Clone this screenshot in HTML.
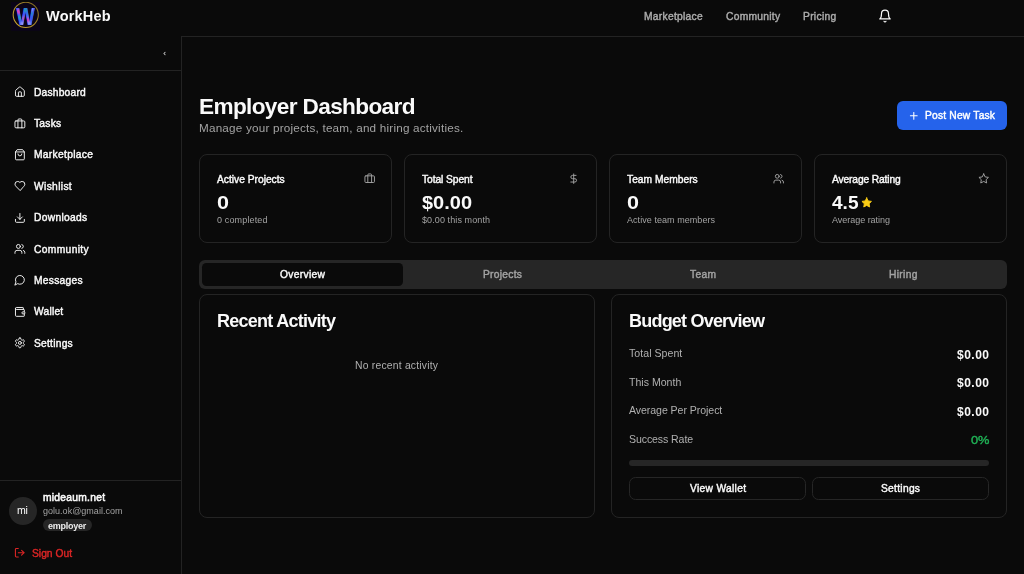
<!DOCTYPE html>
<html lang="en">
<head>
<meta charset="utf-8">
<title>WorkHeb - Employer Dashboard</title>
<style>
*{box-sizing:border-box;margin:0;padding:0}
html,body{width:1024px;height:574px;overflow:hidden;background:#0a0a0a;}
body{position:relative;font-family:"Liberation Sans",sans-serif;color:#fafafa;-webkit-font-smoothing:antialiased}
.tx{position:absolute;white-space:nowrap;line-height:1;display:block;text-decoration:none;will-change:transform}
.ic{position:absolute;display:block;overflow:visible}
.abs{position:absolute}
header.top{position:absolute;left:0;top:0;width:1024px;height:37px;}
header.top:after{content:'';position:absolute;left:181px;top:36px;width:843px;height:1px;background:#232323}
aside.side{position:absolute;left:0;top:36px;width:182px;height:538px;border-right:1px solid #232323;}
.side .collapse{position:absolute;left:0;top:0;width:181px;height:35px;border-bottom:1px solid #232323}
.side .user{position:absolute;left:0;top:444px;width:181px;height:94px;border-top:1px solid #232323}
.avatar{position:absolute;left:8.6px;top:496.5px;width:28.3px;height:28.3px;border-radius:50%;background:#262626}
.badge{position:absolute;left:43px;top:519px;width:48.5px;height:12.2px;border-radius:7px;background:#262626}
.card{position:absolute;border:1px solid #242424;border-radius:8px;background:#0a0a0a}
.tabs{position:absolute;background:#262626;border-radius:6px}
.tabact{position:absolute;background:#0a0a0a;border-radius:4.5px}
.btn-primary{position:absolute;left:897px;top:101px;width:110px;height:28.5px;border-radius:6px;background:#2563eb}
.btn-outline{position:absolute;border:1px solid #262626;border-radius:6.5px;background:#0a0a0a}
.progress{position:absolute;left:629px;top:460px;width:360px;height:6px;border-radius:3px;background:#262626}
.logo{position:absolute;left:11px;top:2px;width:29px;height:28.8px;display:block}
</style>
</head>
<body>
<header class="top">
  <svg class="logo" viewBox="0 0 29 28.8">
    <defs>
      <linearGradient id="rg" x1="1" y1="0" x2="0" y2="1"><stop offset="0" stop-color="#7a6520"/><stop offset="0.5" stop-color="#a88a28"/><stop offset="1" stop-color="#d0aa30"/></linearGradient>
    </defs>
    <rect width="29" height="28.8" fill="#0b0418"/>
    <circle cx="14.75" cy="12.85" r="12.6" fill="none" stroke="url(#rg)" stroke-width="1.05"/>
    <clipPath id="wc"><text transform="translate(14.6 22.9) scale(0.8 1)" x="0" y="0" text-anchor="middle" font-family="Liberation Sans, sans-serif" font-weight="700" font-size="24.6">W</text></clipPath>
    <filter id="bl" x="-20%" y="-20%" width="140%" height="140%"><feGaussianBlur stdDeviation="0.9"/></filter>
    <text transform="translate(14.6 22.9) scale(0.8 1)" x="0" y="0" text-anchor="middle" font-family="Liberation Sans, sans-serif" font-weight="700" font-size="24.6" fill="#3558f2">W</text>
    <g clip-path="url(#wc)"><g filter="url(#bl)">
      <rect x="0" y="0" width="29" height="28.8" fill="#3558f2"/>
      <circle cx="7.4" cy="9.6" r="2.1" fill="#ff3aa0"/>
      <circle cx="8.9" cy="15.4" r="2" fill="#17b3a8"/>
      <circle cx="14.2" cy="8" r="2" fill="#14a7a0"/>
      <circle cx="19" cy="11.6" r="2" fill="#1fae8e"/>
      <circle cx="15.7" cy="18.3" r="2.2" fill="#ff2f9a"/>
      <circle cx="12.9" cy="16" r="1.6" fill="#e23ab0"/>
      <circle cx="20.6" cy="7.4" r="1.8" fill="#c9c2ff"/>
      <circle cx="11.4" cy="21.6" r="1.7" fill="#b7b0ff"/>
      <circle cx="18.3" cy="21.4" r="1.7" fill="#9fb0ff"/>
      <circle cx="10.6" cy="11.5" r="1.5" fill="#6a3df0"/>
      <circle cx="17" cy="14.5" r="1.6" fill="#4a7bff"/>
      <circle cx="22.6" cy="8.2" r="1.6" fill="#2a4cf0"/>
      <circle cx="5.6" cy="6.6" r="1.5" fill="#4468ff"/>
    </g></g>
  </svg>
  <span class="tx" style="left:45.80px;top:9.00px;font-size:14.53px;font-weight:700;color:#fafafa;letter-spacing:0.191px;">WorkHeb</span>
  <nav>
  <span class="tx" style="left:643.50px;top:12.00px;font-size:10.25px;font-weight:400;color:#acacac;letter-spacing:0.286px;-webkit-text-stroke:0.42px #acacac;">Marketplace</span>
  <span class="tx" style="left:725.50px;top:12.00px;font-size:10.25px;font-weight:400;color:#acacac;letter-spacing:0.282px;-webkit-text-stroke:0.42px #acacac;">Community</span>
  <span class="tx" style="left:803.00px;top:12.00px;font-size:10.25px;font-weight:400;color:#acacac;letter-spacing:0.309px;-webkit-text-stroke:0.42px #acacac;">Pricing</span>
  </nav>
  <svg class="ic " style="left:877.90px;top:9.40px;width:14.0px;height:14.0px;color:#fafafa" viewBox="0 0 24 24" fill="none" stroke="currentColor" stroke-width="2" stroke-linecap="round" stroke-linejoin="round"><path d="M6 8a6 6 0 0 1 12 0c0 7 3 9 3 9H3s3-2 3-9"/><path d="M10.3 21a1.94 1.94 0 0 0 3.4 0"/></svg>
</header>

<aside class="side">
  <div class="collapse"></div>
  <div class="user"></div>
</aside>
<svg class="ic " style="left:161.80px;top:50.80px;width:5.0px;height:5.0px;color:#c8c8c8" viewBox="0 0 24 24" fill="none" stroke="currentColor" stroke-width="5" stroke-linecap="round" stroke-linejoin="round"><path d="m15 18-6-6 6-6"/></svg>
<nav class="sidenav">
<a class="navitem"><svg class="ic " style="left:14.10px;top:86.30px;width:11.8px;height:11.8px;color:#fafafa" viewBox="0 0 24 24" fill="none" stroke="currentColor" stroke-width="1.9" stroke-linecap="round" stroke-linejoin="round"><path d="M15 21v-8a1 1 0 0 0-1-1h-4a1 1 0 0 0-1 1v8"/><path d="M3 10a2 2 0 0 1 .709-1.528l7-5.999a2 2 0 0 1 2.582 0l7 5.999A2 2 0 0 1 21 10v9a2 2 0 0 1-2 2H5a2 2 0 0 1-2-2z"/></svg><span class="tx" style="left:34.30px;top:88.00px;font-size:10.25px;font-weight:400;color:#fafafa;letter-spacing:0.193px;-webkit-text-stroke:0.42px #fafafa;">Dashboard</span></a>
<a class="navitem"><svg class="ic " style="left:14.10px;top:117.60px;width:11.8px;height:11.8px;color:#fafafa" viewBox="0 0 24 24" fill="none" stroke="currentColor" stroke-width="1.9" stroke-linecap="round" stroke-linejoin="round"><path d="M16 20V4a2 2 0 0 0-2-2h-4a2 2 0 0 0-2 2v16"/><rect width="20" height="14" x="2" y="6" rx="2"/></svg><span class="tx" style="left:34.30px;top:119.00px;font-size:10.25px;font-weight:400;color:#fafafa;letter-spacing:0.249px;-webkit-text-stroke:0.42px #fafafa;">Tasks</span></a>
<a class="navitem"><svg class="ic " style="left:14.10px;top:148.90px;width:11.8px;height:11.8px;color:#fafafa" viewBox="0 0 24 24" fill="none" stroke="currentColor" stroke-width="1.9" stroke-linecap="round" stroke-linejoin="round"><path d="M6 2 3 6v14a2 2 0 0 0 2 2h14a2 2 0 0 0 2-2V6l-3-4Z"/><path d="M3 6h18"/><path d="M16 10a4 4 0 0 1-8 0"/></svg><span class="tx" style="left:34.30px;top:150.00px;font-size:10.25px;font-weight:400;color:#fafafa;letter-spacing:0.316px;-webkit-text-stroke:0.42px #fafafa;">Marketplace</span></a>
<a class="navitem"><svg class="ic " style="left:14.10px;top:180.20px;width:11.8px;height:11.8px;color:#fafafa" viewBox="0 0 24 24" fill="none" stroke="currentColor" stroke-width="1.9" stroke-linecap="round" stroke-linejoin="round"><path d="M19 14c1.49-1.46 3-3.21 3-5.5A5.5 5.5 0 0 0 16.5 3c-1.76 0-3 .5-4.5 2-1.5-1.5-2.74-2-4.5-2A5.5 5.5 0 0 0 2 8.5c0 2.3 1.5 4.05 3 5.5l7 7Z"/></svg><span class="tx" style="left:34.30px;top:182.00px;font-size:10.25px;font-weight:400;color:#fafafa;letter-spacing:0.341px;-webkit-text-stroke:0.42px #fafafa;">Wishlist</span></a>
<a class="navitem"><svg class="ic " style="left:14.10px;top:211.80px;width:11.8px;height:11.8px;color:#fafafa" viewBox="0 0 24 24" fill="none" stroke="currentColor" stroke-width="1.9" stroke-linecap="round" stroke-linejoin="round"><path d="M21 15v4a2 2 0 0 1-2 2H5a2 2 0 0 1-2-2v-4"/><polyline points="7 10 12 15 17 10"/><line x1="12" x2="12" y1="15" y2="3"/></svg><span class="tx" style="left:34.30px;top:213.00px;font-size:10.25px;font-weight:400;color:#fafafa;letter-spacing:0.310px;-webkit-text-stroke:0.42px #fafafa;">Downloads</span></a>
<a class="navitem"><svg class="ic " style="left:14.10px;top:243.40px;width:11.8px;height:11.8px;color:#fafafa" viewBox="0 0 24 24" fill="none" stroke="currentColor" stroke-width="1.9" stroke-linecap="round" stroke-linejoin="round"><path d="M16 21v-2a4 4 0 0 0-4-4H6a4 4 0 0 0-4 4v2"/><circle cx="9" cy="7" r="4"/><path d="M22 21v-2a4 4 0 0 0-3-3.87"/><path d="M16 3.13a4 4 0 0 1 0 7.75"/></svg><span class="tx" style="left:34.30px;top:245.00px;font-size:10.25px;font-weight:400;color:#fafafa;letter-spacing:0.357px;-webkit-text-stroke:0.42px #fafafa;">Community</span></a>
<a class="navitem"><svg class="ic " style="left:14.10px;top:274.10px;width:11.8px;height:11.8px;color:#fafafa" viewBox="0 0 24 24" fill="none" stroke="currentColor" stroke-width="1.9" stroke-linecap="round" stroke-linejoin="round"><path d="M7.9 20A9 9 0 1 0 4 16.1L2 22Z"/></svg><span class="tx" style="left:34.30px;top:276.00px;font-size:10.25px;font-weight:400;color:#fafafa;letter-spacing:0.283px;-webkit-text-stroke:0.42px #fafafa;">Messages</span></a>
<a class="navitem"><svg class="ic " style="left:14.10px;top:305.90px;width:11.8px;height:11.8px;color:#fafafa" viewBox="0 0 24 24" fill="none" stroke="currentColor" stroke-width="1.9" stroke-linecap="round" stroke-linejoin="round"><path d="M19 7V4a1 1 0 0 0-1-1H5a2 2 0 0 0 0 4h15a1 1 0 0 1 1 1v4h-3a2 2 0 0 0 0 4h3a1 1 0 0 0 1-1v-2a1 1 0 0 0-1-1"/><path d="M3 5v14a2 2 0 0 0 2 2h15a1 1 0 0 0 1-1v-4"/></svg><span class="tx" style="left:34.30px;top:307.00px;font-size:10.25px;font-weight:400;color:#fafafa;letter-spacing:0.218px;-webkit-text-stroke:0.42px #fafafa;">Wallet</span></a>
<a class="navitem"><svg class="ic " style="left:14.10px;top:337.20px;width:11.8px;height:11.8px;color:#fafafa" viewBox="0 0 24 24" fill="none" stroke="currentColor" stroke-width="1.9" stroke-linecap="round" stroke-linejoin="round"><path d="M12.22 2h-.44a2 2 0 0 0-2 2v.18a2 2 0 0 1-1 1.73l-.43.25a2 2 0 0 1-2 0l-.15-.08a2 2 0 0 0-2.73.73l-.22.38a2 2 0 0 0 .73 2.73l.15.1a2 2 0 0 1 1 1.72v.51a2 2 0 0 1-1 1.74l-.15.09a2 2 0 0 0-.73 2.73l.22.38a2 2 0 0 0 2.73.73l.15-.08a2 2 0 0 1 2 0l.43.25a2 2 0 0 1 1 1.73V20a2 2 0 0 0 2 2h.44a2 2 0 0 0 2-2v-.18a2 2 0 0 1 1-1.73l.43-.25a2 2 0 0 1 2 0l.15.08a2 2 0 0 0 2.73-.73l.22-.39a2 2 0 0 0-.73-2.73l-.15-.08a2 2 0 0 1-1-1.74v-.5a2 2 0 0 1 1-1.74l.15-.09a2 2 0 0 0 .73-2.73l-.22-.38a2 2 0 0 0-2.73-.73l-.15.08a2 2 0 0 1-2 0l-.43-.25a2 2 0 0 1-1-1.73V4a2 2 0 0 0-2-2z"/><circle cx="12" cy="12" r="3"/></svg><span class="tx" style="left:34.30px;top:339.00px;font-size:10.25px;font-weight:400;color:#fafafa;letter-spacing:0.236px;-webkit-text-stroke:0.42px #fafafa;">Settings</span></a>
</nav>
<div class="avatar"></div>
<span class="tx" style="left:17.20px;top:505.00px;font-size:10.57px;font-weight:400;color:#fafafa;letter-spacing:-0.356px;">mi</span>
<span class="tx" style="left:42.80px;top:493.00px;font-size:10.25px;font-weight:400;color:#fafafa;letter-spacing:0.273px;-webkit-text-stroke:0.55px #fafafa;">mideaum.net</span>
<span class="tx" style="left:42.80px;top:507.00px;font-size:9.01px;font-weight:400;color:#a3a3a3;letter-spacing:0.021px;">golu.ok@gmail.com</span>
<div class="badge"></div>
<span class="tx" style="left:47.80px;top:522.00px;font-size:9.01px;font-weight:700;color:#ededed;letter-spacing:-0.262px;">employer</span>
<svg class="ic " style="left:13.80px;top:547.10px;width:11.4px;height:11.4px;color:#dc2626" viewBox="0 0 24 24" fill="none" stroke="currentColor" stroke-width="2.3" stroke-linecap="round" stroke-linejoin="round"><path d="M9 21H5a2 2 0 0 1-2-2V5a2 2 0 0 1 2-2h4"/><polyline points="16 17 21 12 16 7"/><line x1="21" x2="9" y1="12" y2="12"/></svg>
<span class="tx" style="left:31.80px;top:549.00px;font-size:10.25px;font-weight:400;color:#dc2626;letter-spacing:0.016px;-webkit-text-stroke:0.42px #dc2626;">Sign Out</span>

<main>
<h1 class="tx" style="left:199.30px;top:96.00px;font-size:22.60px;font-weight:700;color:#fafafa;letter-spacing:-0.633px;">Employer Dashboard</h1>
<p class="tx" style="left:199.30px;top:122.00px;font-size:11.70px;font-weight:400;color:#a3a3a3;letter-spacing:0.208px;">Manage your projects, team, and hiring activities.</p>
<div class="btn-primary"></div>
<svg class="ic " style="left:908.10px;top:109.50px;width:11.6px;height:11.6px;color:#ffffff" viewBox="0 0 24 24" fill="none" stroke="currentColor" stroke-width="2.2" stroke-linecap="round" stroke-linejoin="round"><path d="M5 12h14"/><path d="M12 5v14"/></svg>
<span class="tx" style="left:924.90px;top:111.00px;font-size:10.25px;font-weight:400;color:#ffffff;letter-spacing:0.199px;-webkit-text-stroke:0.42px #ffffff;">Post New Task</span>

<section class="card" style="left:199px;top:154px;width:193.45px;height:89px"></section>
<span class="tx" style="left:216.70px;top:175.00px;font-size:10.25px;font-weight:400;color:#fafafa;letter-spacing:-0.007px;-webkit-text-stroke:0.42px #fafafa;">Active Projects</span>
<svg class="ic " style="left:363.50px;top:172.80px;width:11.4px;height:11.4px;color:#a3a3a3" viewBox="0 0 24 24" fill="none" stroke="currentColor" stroke-width="2" stroke-linecap="round" stroke-linejoin="round"><path d="M16 20V4a2 2 0 0 0-2-2h-4a2 2 0 0 0-2 2v16"/><rect width="20" height="14" x="2" y="6" rx="2"/></svg>
<span class="tx" style="left:217.00px;top:194.00px;font-size:18.04px;font-weight:700;color:#fafafa;transform:scaleX(1.1963);transform-origin:0 0;">0</span>
<span class="tx" style="left:217.00px;top:216.00px;font-size:9.01px;font-weight:400;color:#a3a3a3;letter-spacing:0.147px;">0 completed</span>
<section class="card" style="left:403.85px;top:154px;width:193.45px;height:89px"></section>
<span class="tx" style="left:421.70px;top:175.00px;font-size:10.25px;font-weight:400;color:#fafafa;letter-spacing:-0.080px;-webkit-text-stroke:0.42px #fafafa;">Total Spent</span>
<svg class="ic " style="left:568.35px;top:172.80px;width:11.4px;height:11.4px;color:#a3a3a3" viewBox="0 0 24 24" fill="none" stroke="currentColor" stroke-width="2" stroke-linecap="round" stroke-linejoin="round"><line x1="12" x2="12" y1="2" y2="22"/><path d="M17 5H9.5a3.5 3.5 0 0 0 0 7h5a3.5 3.5 0 0 1 0 7H6"/></svg>
<span class="tx" style="left:422.00px;top:194.00px;font-size:18.04px;font-weight:700;color:#fafafa;transform:scaleX(1.1080);transform-origin:0 0;">$0.00</span>
<span class="tx" style="left:422.00px;top:216.00px;font-size:9.01px;font-weight:400;color:#a3a3a3;letter-spacing:0.097px;">$0.00 this month</span>
<section class="card" style="left:608.7px;top:154px;width:193.45px;height:89px"></section>
<span class="tx" style="left:626.70px;top:175.00px;font-size:10.25px;font-weight:400;color:#fafafa;letter-spacing:0.005px;-webkit-text-stroke:0.42px #fafafa;">Team Members</span>
<svg class="ic " style="left:773.20px;top:172.80px;width:11.4px;height:11.4px;color:#a3a3a3" viewBox="0 0 24 24" fill="none" stroke="currentColor" stroke-width="2" stroke-linecap="round" stroke-linejoin="round"><path d="M16 21v-2a4 4 0 0 0-4-4H6a4 4 0 0 0-4 4v2"/><circle cx="9" cy="7" r="4"/><path d="M22 21v-2a4 4 0 0 0-3-3.87"/><path d="M16 3.13a4 4 0 0 1 0 7.75"/></svg>
<span class="tx" style="left:627.00px;top:194.00px;font-size:18.04px;font-weight:700;color:#fafafa;transform:scaleX(1.1963);transform-origin:0 0;">0</span>
<span class="tx" style="left:627.00px;top:216.00px;font-size:9.01px;font-weight:400;color:#a3a3a3;letter-spacing:0.054px;">Active team members</span>
<section class="card" style="left:813.55px;top:154px;width:193.45px;height:89px"></section>
<span class="tx" style="left:831.70px;top:175.00px;font-size:10.25px;font-weight:400;color:#fafafa;letter-spacing:-0.136px;-webkit-text-stroke:0.42px #fafafa;">Average Rating</span>
<svg class="ic " style="left:978.05px;top:172.80px;width:11.4px;height:11.4px;color:#a3a3a3" viewBox="0 0 24 24" fill="none" stroke="currentColor" stroke-width="2" stroke-linecap="round" stroke-linejoin="round"><polygon points="12 2 15.09 8.26 22 9.27 17 14.14 18.18 21.02 12 17.77 5.82 21.02 7 14.14 2 9.27 8.91 8.26 12 2"/></svg>
<span class="tx" style="left:832.00px;top:194.00px;font-size:18.04px;font-weight:700;color:#fafafa;transform:scaleX(1.0567);transform-origin:0 0;">4.5</span>
<span class="tx" style="left:832.00px;top:216.00px;font-size:9.01px;font-weight:400;color:#a3a3a3;letter-spacing:-0.029px;">Average rating</span>
<svg class="ic " style="left:861.30px;top:197.10px;width:11.4px;height:11.4px;color:#facc15" viewBox="0 0 24 24" fill="#facc15" stroke="currentColor" stroke-width="2" stroke-linecap="round" stroke-linejoin="round"><polygon points="12 2 15.09 8.26 22 9.27 17 14.14 18.18 21.02 12 17.77 5.82 21.02 7 14.14 2 9.27 8.91 8.26 12 2"/></svg>

<div class="tabs" style="left:199px;top:260px;width:808px;height:29px"></div>
<div class="tabact" style="left:202px;top:263px;width:200.5px;height:23px"></div>
<span class="tx" style="left:279.50px;top:270.00px;font-size:10.25px;font-weight:400;color:#fafafa;letter-spacing:0.326px;-webkit-text-stroke:0.42px #fafafa;">Overview</span>
<span class="tx" style="left:483.00px;top:270.00px;font-size:10.25px;font-weight:400;color:#a3a3a3;letter-spacing:0.281px;-webkit-text-stroke:0.42px #a3a3a3;">Projects</span>
<span class="tx" style="left:690.00px;top:270.00px;font-size:10.25px;font-weight:400;color:#a3a3a3;letter-spacing:0.307px;-webkit-text-stroke:0.42px #a3a3a3;">Team</span>
<span class="tx" style="left:889.25px;top:270.00px;font-size:10.25px;font-weight:400;color:#a3a3a3;letter-spacing:0.344px;-webkit-text-stroke:0.42px #a3a3a3;">Hiring</span>

<section class="card" style="left:199px;top:294px;width:395.6px;height:223.5px"></section>
<h2 class="tx" style="left:217.00px;top:312.00px;font-size:18.04px;font-weight:700;color:#fafafa;letter-spacing:-0.758px;">Recent Activity</h2>
<span class="tx" style="left:354.80px;top:361.00px;font-size:10.36px;font-weight:400;color:#b0b0b0;letter-spacing:0.209px;">No recent activity</span>

<section class="card" style="left:611.1px;top:294px;width:395.9px;height:223.5px"></section>
<h2 class="tx" style="left:629.00px;top:312.00px;font-size:18.04px;font-weight:700;color:#fafafa;letter-spacing:-0.807px;">Budget Overview</h2>
<span class="tx" style="left:629.40px;top:348.00px;font-size:10.57px;font-weight:400;color:#b0b0b0;letter-spacing:0.044px;">Total Spent</span>
<span class="tx" style="left:957.00px;top:349.00px;font-size:12.03px;font-weight:700;color:#fafafa;letter-spacing:0.480px;">$0.00</span>
<span class="tx" style="left:629.40px;top:377.00px;font-size:10.57px;font-weight:400;color:#b0b0b0;letter-spacing:0.006px;">This Month</span>
<span class="tx" style="left:957.00px;top:377.00px;font-size:12.03px;font-weight:700;color:#fafafa;letter-spacing:0.480px;">$0.00</span>
<span class="tx" style="left:629.40px;top:405.00px;font-size:10.57px;font-weight:400;color:#b0b0b0;letter-spacing:-0.058px;">Average Per Project</span>
<span class="tx" style="left:957.00px;top:406.00px;font-size:12.03px;font-weight:700;color:#fafafa;letter-spacing:0.480px;">$0.00</span>
<span class="tx" style="left:629.40px;top:434.00px;font-size:10.57px;font-weight:400;color:#b0b0b0;letter-spacing:-0.097px;">Success Rate</span>
<span class="tx" style="left:970.50px;top:434.00px;font-size:11.66px;font-weight:400;color:#20b256;transform:scaleX(1.0973);transform-origin:0 0;-webkit-text-stroke:0.4px #20b256;">0%</span>

<div class="progress"></div>
<div class="btn-outline" style="left:629px;top:477.3px;width:177px;height:22.8px"></div>
<div class="btn-outline" style="left:812px;top:477.3px;width:177px;height:22.8px"></div>
<span class="tx" style="left:690.00px;top:484.00px;font-size:10.25px;font-weight:400;color:#fafafa;letter-spacing:0.302px;-webkit-text-stroke:0.42px #fafafa;">View Wallet</span>
<span class="tx" style="left:881.00px;top:484.00px;font-size:10.25px;font-weight:400;color:#fafafa;letter-spacing:0.279px;-webkit-text-stroke:0.42px #fafafa;">Settings</span>
</main>
</body>
</html>
